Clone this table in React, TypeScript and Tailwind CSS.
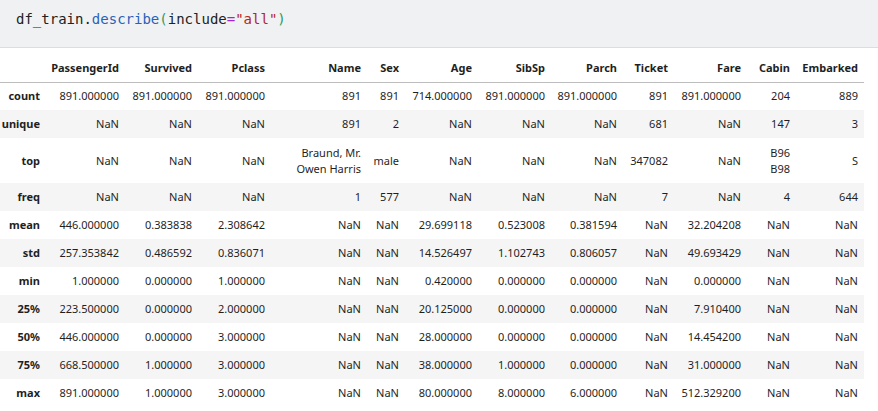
import React from "react";

const columns = [
  { name: "PassengerId", w: "w-[79px]" },
  { name: "Survived", w: "w-[73px]" },
  { name: "Pclass", w: "w-[73px]" },
  { name: "Name", w: "w-[96px]" },
  { name: "Sex", w: "w-[38px]" },
  { name: "Age", w: "w-[73px]" },
  { name: "SibSp", w: "w-[73px]" },
  { name: "Parch", w: "w-[72px]" },
  { name: "Ticket", w: "w-[51px]" },
  { name: "Fare", w: "w-[73px]" },
  { name: "Cabin", w: "w-[49px]" },
  { name: "Embarked", w: "w-[68px]" },
];

type Cell = string | string[];

const rows: { label: string; tall?: boolean; cells: Cell[] }[] = [
  { label: "count", cells: ["891.000000", "891.000000", "891.000000", "891", "891", "714.000000", "891.000000", "891.000000", "891", "891.000000", "204", "889"] },
  { label: "unique", cells: ["NaN", "NaN", "NaN", "891", "2", "NaN", "NaN", "NaN", "681", "NaN", "147", "3"] },
  { label: "top", tall: true, cells: ["NaN", "NaN", "NaN", ["Braund, Mr.", "Owen Harris"], "male", "NaN", "NaN", "NaN", "347082", "NaN", ["B96", "B98"], "S"] },
  { label: "freq", cells: ["NaN", "NaN", "NaN", "1", "577", "NaN", "NaN", "NaN", "7", "NaN", "4", "644"] },
  { label: "mean", cells: ["446.000000", "0.383838", "2.308642", "NaN", "NaN", "29.699118", "0.523008", "0.381594", "NaN", "32.204208", "NaN", "NaN"] },
  { label: "std", cells: ["257.353842", "0.486592", "0.836071", "NaN", "NaN", "14.526497", "1.102743", "0.806057", "NaN", "49.693429", "NaN", "NaN"] },
  { label: "min", cells: ["1.000000", "0.000000", "1.000000", "NaN", "NaN", "0.420000", "0.000000", "0.000000", "NaN", "0.000000", "NaN", "NaN"] },
  { label: "25%", cells: ["223.500000", "0.000000", "2.000000", "NaN", "NaN", "20.125000", "0.000000", "0.000000", "NaN", "7.910400", "NaN", "NaN"] },
  { label: "50%", cells: ["446.000000", "0.000000", "3.000000", "NaN", "NaN", "28.000000", "0.000000", "0.000000", "NaN", "14.454200", "NaN", "NaN"] },
  { label: "75%", cells: ["668.500000", "1.000000", "3.000000", "NaN", "NaN", "38.000000", "1.000000", "0.000000", "NaN", "31.000000", "NaN", "NaN"] },
  { label: "max", cells: ["891.000000", "1.000000", "3.000000", "NaN", "NaN", "80.000000", "8.000000", "6.000000", "NaN", "512.329200", "NaN", "NaN"] },
];

function CodeCell() {
  return (
    <div className="h-[48px] bg-[#f0f1f3] border-b border-[#dcdde0] pl-[16px] pt-[9px] font-['DejaVu_Sans_Mono',monospace] text-[14px] leading-[20px] text-[#212121] whitespace-pre">
      <span>df_train.</span>
      <span className="text-[#2a62b8]">describe</span>
      <span className="text-[#2f9a5e]">(</span>
      <span>include</span>
      <span className="text-[#a324d6]">=</span>
      <span className="text-[#b3261e]">"all"</span>
      <span className="text-[#2f9a5e]">)</span>
    </div>
  );
}

export default function App() {
  return (
    <div className="w-[878px] h-[411px] bg-white overflow-hidden">
      <CodeCell />
      <div className="pt-[6px]">
        <table className="table-fixed border-collapse w-[864px] font-['Noto_Sans',sans-serif] text-[11px] leading-[16px] text-[#1f1f1f]">
          <colgroup>
            <col className="w-[46px]" />
            {columns.map((c) => (
              <col key={c.name} className={c.w} />
            ))}
          </colgroup>
          <thead>
            <tr className="h-[28px] border-b border-[#bdbdbd]">
              <th />
              {columns.map((c) => (
                <th key={c.name} className="text-right font-bold pr-[6px] align-middle whitespace-nowrap">
                  {c.name}
                </th>
              ))}
            </tr>
          </thead>
          <tbody>
            {rows.map((r, i) => (
              <tr key={r.label} className={`${r.tall ? "h-[45px]" : "h-[28px]"} ${i % 2 === 1 ? "bg-[#f5f5f5]" : "bg-white"}`}>
                <th className="text-right font-bold pr-[6px] align-middle whitespace-nowrap">{r.label}</th>
                {r.cells.map((v, j) => (
                  <td key={j} className="text-right pr-[6px] align-middle whitespace-nowrap">
                    {Array.isArray(v) ? (
                      <>
                        {v[0]}
                        <br />
                        {v[1]}
                      </>
                    ) : (
                      v
                    )}
                  </td>
                ))}
              </tr>
            ))}
          </tbody>
        </table>
      </div>
    </div>
  );
}
